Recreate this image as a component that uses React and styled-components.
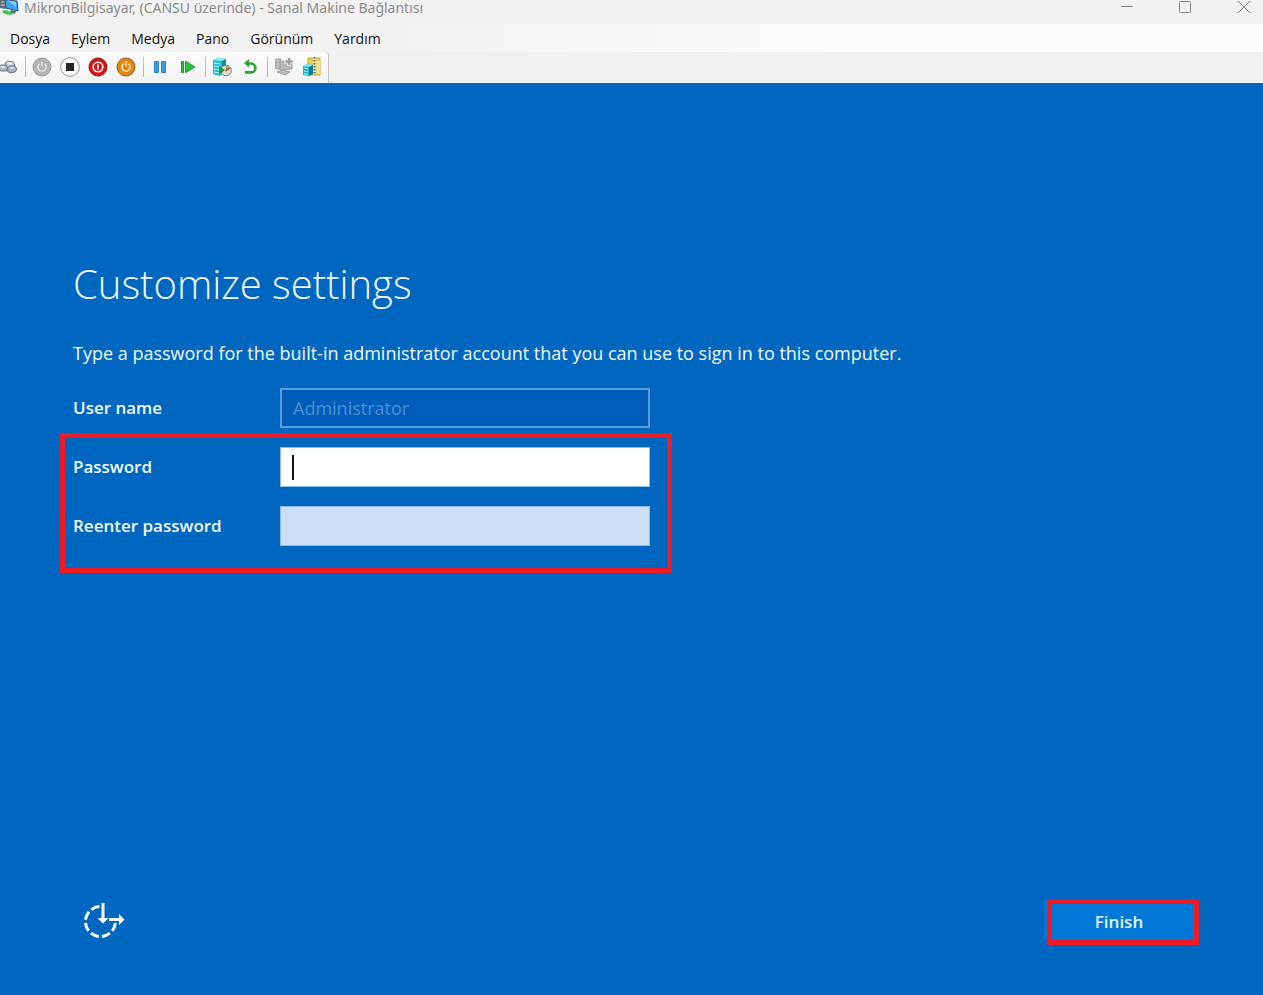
import React from "react";
import styled, { createGlobalStyle, css } from "styled-components";

const MENU_ITEMS = ["Dosya", "Eylem", "Medya", "Pano", "Görünüm", "Yardım"];

export default function App() {
  return (
    <Window>
      <GlobalStyle />
      <TitleBar>
        <MonitorIcon />
        <Title>MikronBilgisayar, (CANSU üzerinde) - Sanal Makine Bağlantısı</Title>
        <WindowControls>
          <ControlButton aria-label="Minimize">
            <svg width="14" height="14" viewBox="0 0 14 14">
              <path d="M1 5.5h12" />
            </svg>
          </ControlButton>
          <ControlButton aria-label="Maximize">
            <svg width="14" height="14" viewBox="0 0 14 14">
              <rect x="1.5" y="0.5" width="11" height="11" rx="1" />
            </svg>
          </ControlButton>
          <ControlButton aria-label="Close">
            <svg width="14" height="14" viewBox="0 0 14 14">
              <path d="M2 0l12 12M14 0L2 12" />
            </svg>
          </ControlButton>
        </WindowControls>
      </TitleBar>
      <MenuBar>
        {MENU_ITEMS.map((item) => (
          <MenuButton key={item}>{item}</MenuButton>
        ))}
      </MenuBar>
      <ToolBar>
        <ToolStrip>
          <ToolButton $narrow aria-label="Ctrl+Alt+Del">
            <KeysIcon />
          </ToolButton>
          <Separator />
          <ToolButton aria-label="Start">
            <PowerIcon fill="#b3b3b3" stroke="#9c9c9c" mark="#e9e9e9" />
          </ToolButton>
          <ToolButton aria-label="Turn off">
            <StopIcon />
          </ToolButton>
          <ToolButton aria-label="Shut down">
            <ShutdownIcon />
          </ToolButton>
          <ToolButton aria-label="Save">
            <PowerIcon fill="#e6850c" stroke="#8f5f1c" mark="#fff3df" />
          </ToolButton>
          <Separator />
          <ToolButton aria-label="Pause">
            <PauseIcon />
          </ToolButton>
          <ToolButton aria-label="Reset">
            <ResetIcon />
          </ToolButton>
          <Separator />
          <ToolButton aria-label="Checkpoint">
            <CheckpointIcon />
          </ToolButton>
          <ToolButton aria-label="Revert">
            <RevertIcon />
          </ToolButton>
          <Separator />
          <ToolButton aria-label="Enhanced session">
            <SessionIcon />
          </ToolButton>
          <ToolButton aria-label="Share">
            <ShareIcon />
          </ToolButton>
        </ToolStrip>
      </ToolBar>
      <Screen>
        <Heading>Customize settings</Heading>
        <Intro>
          Type a password for the built-in administrator account that you can
          use to sign in to this computer.
        </Intro>
        <Form id="setup">
          <Field>
            <Label htmlFor="user">User name</Label>
            <Input id="user" defaultValue="Administrator" disabled />
          </Field>
          <Marked>
            <Field>
              <Label htmlFor="password">Password</Label>
              <InputWrap>
                <Input id="password" type="password" $active />
                <Caret />
              </InputWrap>
            </Field>
            <Field>
              <Label htmlFor="confirm">Reenter password</Label>
              <Input id="confirm" type="password" />
            </Field>
          </Marked>
        </Form>
        <Footer>
          <EaseButton aria-label="Ease of access">
            <EaseIcon />
          </EaseButton>
          <FinishButton form="setup">Finish</FinishButton>
        </Footer>
      </Screen>
    </Window>
  );
}

function MonitorIcon() {
  return (
    <svg width="20" height="16" viewBox="0 0 20 16">
      <path d="M0 0h6v9L0 8z" fill="#5c6b75" />
      <path d="M1 2h4M1 5h4" stroke="#c9d3da" />
      <path d="M5 0l12 1 1 10-12-3z" fill="#3aa5ea" stroke="#27536f" />
      <path d="M7 0l9 2v5z" fill="#7fd0ff" />
      <path d="M11 10l5 1-1 3-5-2z" fill="#5d6a70" />
      <path d="M2 11l4-1 7 3-1 2-6-1-3-1z" fill="#3fbf52" />
      <path d="M4 14l7 1.500" stroke="#a9dcae" />
    </svg>
  );
}

function KeysIcon() {
  return (
    <svg width="20" height="16" viewBox="1 0 20 16">
      <g stroke="#707986">
        <path d="M6 4l3-2 5 1 2 3-3 3-6-1z" fill="#c3cad5" />
        <path d="M-1 8l3-2 5 0 2 3-2 3-5 0z" fill="#b1bac8" />
        <path d="M8 9l3-2 5 0 2 3-2 3-5 1-3-2z" fill="#a4aebd" />
      </g>
      <path d="M8 4l3-1 3 1-3 2zM1 8l3-1 3 1-3 1zM10 9l3-1 3 1-3 1z" fill="#eef1f5" />
    </svg>
  );
}

function PowerIcon({ fill, stroke, mark }) {
  return (
    <svg width="20" height="20" viewBox="0 0 20 20">
      <circle cx="10" cy="10" r="9" fill={fill} stroke={stroke} />
      <path
        d="M7.4 6.9a4.1 4.1 0 1 0 5.2 0M10 4.6v5"
        fill="none"
        stroke={mark}
        strokeWidth="1.4"
      />
    </svg>
  );
}

function StopIcon() {
  return (
    <svg width="20" height="20" viewBox="0 0 20 20">
      <circle cx="10" cy="10" r="9.3" fill="#fff" stroke="#8d8d8d" />
      <path d="M6 6h8v8H6z" fill="#262626" />
    </svg>
  );
}

function ShutdownIcon() {
  return (
    <svg width="20" height="20" viewBox="0 0 20 20">
      <circle cx="10" cy="10" r="9" fill="#dd1111" stroke="#8c1512" />
      <circle cx="10" cy="10" r="4.8" fill="none" stroke="#fff" strokeWidth="1.6" />
      <path d="M10 7.4v5.2" stroke="#fff" strokeWidth="1.6" />
    </svg>
  );
}

function PauseIcon() {
  return (
    <svg width="20" height="20" viewBox="0 0 20 20">
      <path d="M4.5 4.5h4v11h-4zM11.5 4.5h4v11h-4z" fill="#3b9bea" stroke="#2583d2" />
    </svg>
  );
}

function ResetIcon() {
  return (
    <svg width="20" height="20" viewBox="0 0 20 20">
      <path
        d="M3.5 4.5h2v11h-2zM7.5 4.3v11.4L17 10z"
        fill="#25c433"
        stroke="#1b9a28"
      />
    </svg>
  );
}

function CheckpointIcon() {
  return (
    <svg width="20" height="20" viewBox="0 0 20 20">
      <path d="M1 3l5-2 8 1v14l-7 3-6-2z" fill="#26bdd0" />
      <path d="M1 3l5-2 8 1-4 2z" fill="#8fe9f2" />
      <path d="M10 4l4-2v13l-4 2z" fill="#128a9d" />
      <path d="M2 6l6 1M2 9l6 1M2 12l6 1M2 15l5 1" stroke="#c9f8fb" />
      <circle cx="14" cy="13.5" r="5.3" fill="#dcdcd2" stroke="#80857d" />
      <path d="M7 9l6 4-6 5z" fill="#19a32b" />
      <path d="M14 8.6a5 5 0 0 1 4.6 3.4L14 13.5z" fill="#77b96f" />
      <path d="M13.5 14l4-3" stroke="#d5281f" strokeWidth="1.5" />
    </svg>
  );
}

function RevertIcon() {
  return (
    <svg width="20" height="20" viewBox="0 0 20 20">
      <path
        d="M8 6.5h3a4.400 4.400 0 0 1 0 8.900H5"
        fill="none"
        stroke="#28a52d"
        strokeWidth="2.6"
      />
      <path d="M4 6.300L9 2v8.600z" fill="#28a52d" />
    </svg>
  );
}

function SessionIcon() {
  return (
    <svg width="20" height="20" viewBox="0 0 20 20">
      <path d="M1 2l6-1v12l-6-1z" fill="#aaa" />
      <path d="M2 4h4M2 7h4M2 10h3" stroke="#ddd" />
      <path d="M6 4l12 1v7L6 13z" fill="#b9b9b9" stroke="#a0a0a0" />
      <path d="M3 15l6-2 7 2-5 3z" fill="#bdbdbd" stroke="#a2a2a2" />
      <path d="M15 0v9M10.5 4.5h9" stroke="#eee" strokeWidth="4" />
      <path d="M15 1v7M11.5 4.5h7" stroke="#9b9b9b" strokeWidth="2.4" />
    </svg>
  );
}

function ShareIcon() {
  return (
    <svg width="20" height="20" viewBox="0 0 20 20">
      <path d="M6 1h12v17H8L6 14z" fill="#f0cc54" stroke="#cda83a" />
      <path d="M14.5 4H18v13h-3.5z" fill="#fae38f" />
      <path d="M11 0h3v16h-3z" fill="#e8e8e8" />
      <path d="M12.5 0v16" stroke="#5d5d5d" strokeWidth="2" strokeDasharray="1.5 1.5" />
      <path d="M1 9l4-2 6 1v9l-5 2-5-1z" fill="#1fb6cc" />
      <path d="M1 9l4-2 6 1-4 2z" fill="#8fe6f0" />
      <path d="M7 10l4-2v9l-4 2z" fill="#107f95" />
      <path d="M2 11l4 1M2 14l4 1M2 16.5l4 1" stroke="#b9f2f7" />
    </svg>
  );
}

function EaseIcon() {
  return (
    <svg width="42" height="38" viewBox="0 0 42 38" fill="none">
      <path
        d="M32.400 20A15 15 0 1 1 17 3.500"
        stroke="#fff"
        strokeWidth="3"
        strokeDasharray="8.600 3.200"
      />
      <path d="M20 0v16M26 16.500h11" stroke="#fff" strokeWidth="3" />
      <path d="M14.500 15h11L20 20.500zM36 11l5.500 5.500L36 22z" fill="#fff" />
    </svg>
  );
}

const GlobalStyle = createGlobalStyle`
  * {
    box-sizing: border-box;
  }
  body {
    margin: 0;
    font-family: "Open Sans", "Noto Sans", sans-serif;
  }
  button,
  input {
    font-family: inherit;
  }
  svg {
    display: block;
    flex-shrink: 0;
  }
`;

const Window = styled.div`
  display: flex;
  flex-direction: column;
  min-height: 100vh;
  background: #0067c0;
`;

const TitleBar = styled.header`
  display: flex;
  align-items: center;
  gap: 4px;
  height: 24px;
  padding-bottom: 8px;
  background: #f2f2f2;
`;

const Title = styled.div`
  flex: 1;
  font-family: "Noto Sans", sans-serif;
  font-size: 14px;
  line-height: 16px;
  color: #8b8b8b;
  white-space: nowrap;
`;

const WindowControls = styled.div`
  display: flex;
  gap: 18px;
`;

const plainButton = css`
  display: flex;
  align-items: center;
  justify-content: center;
  padding: 0;
  border: none;
  background: none;
`;

const ControlButton = styled.button`
  ${plainButton}
  width: 40px;
  height: 16px;
  & svg {
    fill: none;
    stroke: #868686;
  }
`;

const MenuBar = styled.nav`
  display: flex;
  align-items: center;
  gap: 21px;
  height: 28px;
  padding: 2px 10px 0;
  background: linear-gradient(90deg, #f2f2f2 30%, #fcfcfc 70%);
`;

const MenuButton = styled.button`
  ${plainButton}
  font-size: 14px;
  line-height: 20px;
  color: #111;
`;

const ToolBar = styled.div`
  display: flex;
  height: 31px;
  background: #f0f0f0;
`;

const ToolStrip = styled.div`
  display: flex;
  align-items: center;
  padding: 0 2px 2px 0;
  border-right: 1px solid #c4c4c4;
  border-radius: 0 4px 0 0;
  background: linear-gradient(#fcfcfc, #f3f3f3);
`;

const ToolButton = styled.button`
  ${plainButton}
  width: ${({ $narrow }) => ($narrow ? "22px" : "28px")};
  height: 28px;
  ${({ $narrow }) => $narrow && "justify-content: flex-start;"}
`;

const Separator = styled.div`
  width: 2px;
  height: 20px;
  margin: 0 1px 0 3px;
  border-left: 1px solid #bdbdbd;
`;

const Screen = styled.main`
  display: flex;
  flex: 1;
  flex-direction: column;
  padding: 169px 64px 50px 73px;
  color: #f1f7fd;
`;

const Heading = styled.h1`
  margin: 0;
  font-size: 40px;
  font-weight: 300;
  line-height: 64px;
`;

const Intro = styled.p`
  margin: 24px 0 0;
  font-size: 18px;
  line-height: 26px;
`;

const Form = styled.form`
  display: flex;
  flex-direction: column;
  align-items: flex-start;
  gap: 5px;
  margin-top: 22px;
`;

const Field = styled.div`
  display: grid;
  grid-template-columns: 207px 370px;
  align-items: center;
`;

const Label = styled.label`
  font-size: 17px;
  font-weight: 600;
  line-height: 24px;
`;

const Input = styled.input`
  display: block;
  width: 100%;
  height: 40px;
  padding: 0 11px;
  border: 1px solid #8fbce6;
  border-radius: 0;
  outline: none;
  font-size: 18px;
  background: ${({ $active }) => ($active ? "#fff" : "#ccdff3")};
  color: #111;
  &:disabled {
    border: 2px solid #5c9ddb;
    background: #005cb9;
    color: #4a90d6;
  }
`;

const InputWrap = styled.div`
  position: relative;
`;

const Caret = styled.span`
  position: absolute;
  top: 8px;
  left: 12px;
  width: 2px;
  height: 25px;
  background: #111;
`;

const Marked = styled.div`
  display: flex;
  flex-direction: column;
  gap: 19px;
  margin-left: -13px;
  padding: 9px 17px 22px 8px;
  border: 5px solid #ed1c24;
`;

const Footer = styled.footer`
  display: flex;
  align-items: center;
  justify-content: space-between;
  margin-top: auto;
  padding-left: 10px;
`;

const EaseButton = styled.button`
  ${plainButton}
`;

const FinishButton = styled.button`
  ${plainButton}
  position: relative;
  width: 152px;
  height: 46px;
  padding: 0 8px 2px 0;
  border: 5px solid #ed1c24;
  background: #0078d7;
  font-size: 17px;
  font-weight: 600;
  color: #e3f0fb;
  &::before {
    content: "";
    position: absolute;
    top: -4px;
    left: -8px;
    width: 3px;
    height: 40px;
    background: #0078d7;
  }
`;
